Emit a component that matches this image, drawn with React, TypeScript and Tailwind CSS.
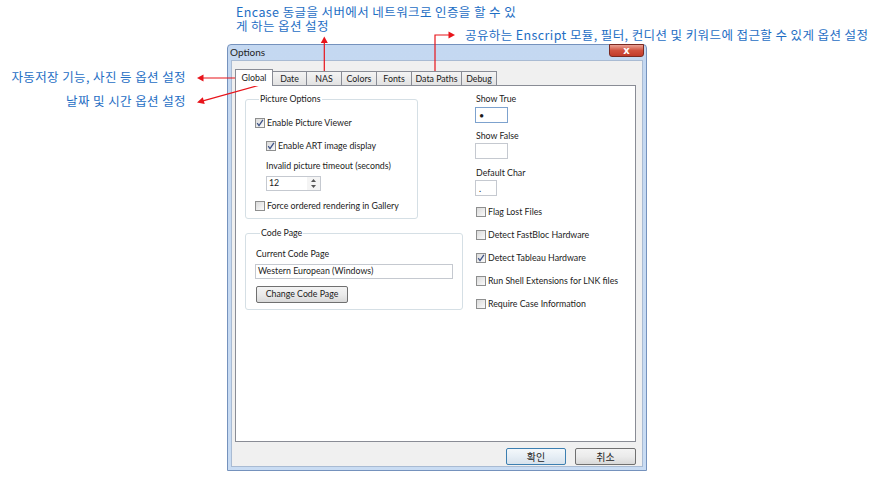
import React from "react";

const UI = "font-['Lato',sans-serif]";
const KR = "font-['Noto_Sans_CJK_KR',sans-serif]";

function Box({ checked }: { checked?: boolean }) {
  return (
    <span className="w-[10px] h-[10px] border border-[#8e8f8f] bg-gradient-to-br from-[#dadada] to-[#fbfbfb] shrink-0 flex items-center justify-center">
      {checked && (
        <svg width="8" height="8" viewBox="0 0 8 8">
          <path d="M1.2 4.2 L3 6.6 L6.9 0.9" stroke="#3f5488" strokeWidth="1.3" fill="none" />
        </svg>
      )}
    </span>
  );
}

function Check({ label, checked, className = "" }: { label: string; checked?: boolean; className?: string }) {
  return (
    <div className={`h-[14px] flex items-center gap-[2px] ${className}`}>
      <Box checked={checked} />
      <span className="leading-[14px] whitespace-nowrap">{label}</span>
    </div>
  );
}

function Tab({ label, w, selected }: { label: string; w: string; selected?: boolean }) {
  if (selected) {
    return (
      <div className={`${w} h-[17px] border border-b-0 border-[#898c95] bg-white flex items-start justify-center pt-[2px] relative z-10`}>
        <span className="leading-[12px]">{label}</span>
      </div>
    );
  }
  return (
    <div className={`${w} h-[15px] -ml-px border border-[#898c95] bg-gradient-to-b from-[#f4f4f4] to-[#e2e2e2] flex items-start justify-center pt-[1px]`}>
      <span className="leading-[12px]">{label}</span>
    </div>
  );
}

function Input({ w, value, focus }: { w: string; value?: string; focus?: boolean }) {
  return (
    <div
      className={`${w} h-[16px] border ${focus ? "border-[#7da2ce]" : "border-[#c5c9d0]"} bg-white flex items-center pl-[3px] text-[9px] leading-none`}
    >
      {value}
    </div>
  );
}

export default function App() {
  return (
    <div className={`relative w-[873px] h-[477px] bg-white overflow-hidden ${UI} text-[8.8px] text-[#1b1b1b]`}>
      {/* annotations */}
      <div className={`absolute left-[236px] top-[5px] ${KR} text-[12.5px] tracking-[0.4px] leading-[13.5px] text-[#1e6ec4] whitespace-nowrap`}>
        Encase 동글을 서버에서 네트워크로 인증을 할 수 있
        <br />게 하는 옵션 설정
      </div>
      <div className={`absolute left-[465px] top-[27px] ${KR} text-[12.5px] tracking-[0.4px] leading-[16px] text-[#1e6ec4] whitespace-nowrap`}>
        공유하는 Enscript 모듈, 필터, 컨디션 및 키워드에 접근할 수 있게 옵션 설정
      </div>
      <div className={`absolute right-[687px] top-[69px] ${KR} text-[12.5px] tracking-[0.4px] leading-[16px] text-[#1e6ec4] whitespace-nowrap text-right`}>
        자동저장 기능, 사진 등 옵션 설정
      </div>
      <div className={`absolute right-[687px] top-[93px] ${KR} text-[12.5px] tracking-[0.4px] leading-[16px] text-[#1e6ec4] whitespace-nowrap text-right`}>
        날짜 및 시간 옵션 설정
      </div>

      {/* window */}
      <div className="absolute left-[227px] top-[44px] w-[420px] h-[427px] border border-[#7592bd] rounded-t-[4px] bg-gradient-to-b from-[#c4d8f1] to-[#c9dcf3] flex flex-col">
        <div className="h-[15px] flex items-start justify-between pl-[2px] pr-[2px]">
          <span className="text-[10px] leading-[15px] text-[#1e1e1e]">Options</span>
          <div className="w-[35px] h-[13px] -mt-px rounded-b-[3px] border border-[#7a2a22] bg-gradient-to-b from-[#e8a195] via-[#d0513f] to-[#c23b2a] flex items-center justify-center">
            <span className="text-white text-[10px] font-bold leading-none font-['DejaVu_Sans',sans-serif]">x</span>
          </div>
        </div>
        <div className="flex-1 mx-[3px] mb-[3px] bg-[#f0f0f0] border border-[#a9bbd3] flex flex-col pl-[3px] pr-[6px] pt-[8px]">
          {/* tabs */}
          <div className="flex items-end h-[17px] -mb-px relative z-10">
            <Tab label="Global" w="w-[38px]" selected />
            <Tab label="Date" w="w-[35px]" />
            <Tab label="NAS" w="w-[36px]" />
            <Tab label="Colors" w="w-[36px]" />
            <Tab label="Fonts" w="w-[36px]" />
            <Tab label="Data Paths" w="w-[51px]" />
            <Tab label="Debug" w="w-[36px]" />
          </div>
          {/* panel */}
          <div className="h-[357px] border border-[#898c95] bg-white flex pl-[9px]">
            {/* left column */}
            <div className="w-[218px] flex flex-col">
              <fieldset className="w-[173px] mt-[7px] border border-[#d5dfe5] rounded-[3px] pl-[9px] pb-[5px]">
                <legend className="ml-[4px] px-[1px] leading-[12px]">Picture Options</legend>
                <Check className="mt-[11px]" label="Enable Picture Viewer" checked />
                <Check className="mt-[9px] ml-[11px]" label="Enable ART image display" checked />
                <div className="mt-[6px] ml-[11px] h-[14px] leading-[14px]">Invalid picture timeout (seconds)</div>
                <div className="mt-[3px] ml-[11px] w-[55px] h-[15px] border border-[#c5c9d0] bg-white flex">
                  <div className="flex-1 flex items-center pl-[2px] leading-none">12</div>
                  <div className="w-[13px] flex flex-col items-center justify-center gap-[3px] bg-[#f4f4f4]">
                    <svg width="5" height="3" viewBox="0 0 5 3">
                      <path d="M0 3 L2.5 0 L5 3 Z" fill="#555" />
                    </svg>
                    <svg width="5" height="3" viewBox="0 0 5 3">
                      <path d="M0 0 L2.5 3 L5 0 Z" fill="#555" />
                    </svg>
                  </div>
                </div>
                <Check className="mt-[8px]" label="Force ordered rendering in Gallery" />
              </fieldset>
              <fieldset className="w-[218px] mt-[8px] border border-[#d5dfe5] rounded-[3px] pl-[10px] pb-[6px]">
                <legend className="ml-[4px] px-[1px] leading-[12px]">Code Page</legend>
                <div className="mt-[8px] h-[14px] leading-[14px]">Current Code Page</div>
                <div className="mt-[3px] -ml-px w-[198px] h-[15px] border border-[#c5c9d0] bg-white flex items-center pl-[2px] leading-none">
                  Western European (Windows)
                </div>
                <div className="mt-[7px] w-[92px] h-[17px] border border-[#707070] rounded-[2px] bg-gradient-to-b from-[#f3f3f3] via-[#ebebeb] to-[#d9d9d9] flex items-center justify-center leading-none">
                  Change Code Page
                </div>
              </fieldset>
            </div>
            {/* right column */}
            <div className="ml-[12px] flex flex-col">
              <div className="mt-[6px] pl-px h-[14px] leading-[14px]">Show True</div>
              <div className="mt-px">
                <Input w="w-[33px]" value="•" focus />
              </div>
              <div className="mt-[6px] pl-px h-[14px] leading-[14px]">Show False</div>
              <Input w="w-[33px]" />
              <div className="mt-[7px] pl-px h-[14px] leading-[14px]">Default Char</div>
              <Input w="w-[22px]" value="." />
              <div className="pl-px flex flex-col">
                <Check className="mt-[9px]" label="Flag Lost Files" />
                <Check className="mt-[9px]" label="Detect FastBloc Hardware" />
                <Check className="mt-[9px]" label="Detect Tableau Hardware" checked />
                <Check className="mt-[9px]" label="Run Shell Extensions for LNK files" />
                <Check className="mt-[9px]" label="Require Case Information" />
              </div>
            </div>
          </div>
          {/* buttons */}
          <div className={`mt-[6px] flex justify-end gap-[9px] ${KR} text-[10px]`}>
            <div className="w-[60px] h-[17px] border border-[#3c7fb1] rounded-[2px] bg-gradient-to-b from-[#f4f8fb] via-[#e6eef5] to-[#d7e2ec] flex items-center justify-center leading-none">
              확인
            </div>
            <div className="w-[61px] h-[17px] border border-[#707070] rounded-[2px] bg-gradient-to-b from-[#f3f3f3] via-[#ebebeb] to-[#d9d9d9] flex items-center justify-center leading-none">
              취소
            </div>
          </div>
        </div>
      </div>

      {/* arrows */}
      <svg className="absolute left-0 top-0 pointer-events-none" width="873" height="477" viewBox="0 0 873 477">
        <g stroke="#e8141b" strokeWidth="1.2" fill="none">
          <path d="M324.3 80 L324.3 42" />
          <path d="M435 82 L435 35 L449 35" />
          <path d="M241 78 L203 78" />
          <path d="M282 79 L203 100.8" />
        </g>
        <g fill="#e8141b">
          <polygon points="324.3,36.5 320.8,43 327.8,43" />
          <polygon points="455,35 448.5,31.6 448.5,38.4" />
          <polygon points="197,78 203.5,74.6 203.5,81.4" />
          <polygon points="197,102.5 204.7,104 202.8,97.3" />
        </g>
      </svg>
    </div>
  );
}
